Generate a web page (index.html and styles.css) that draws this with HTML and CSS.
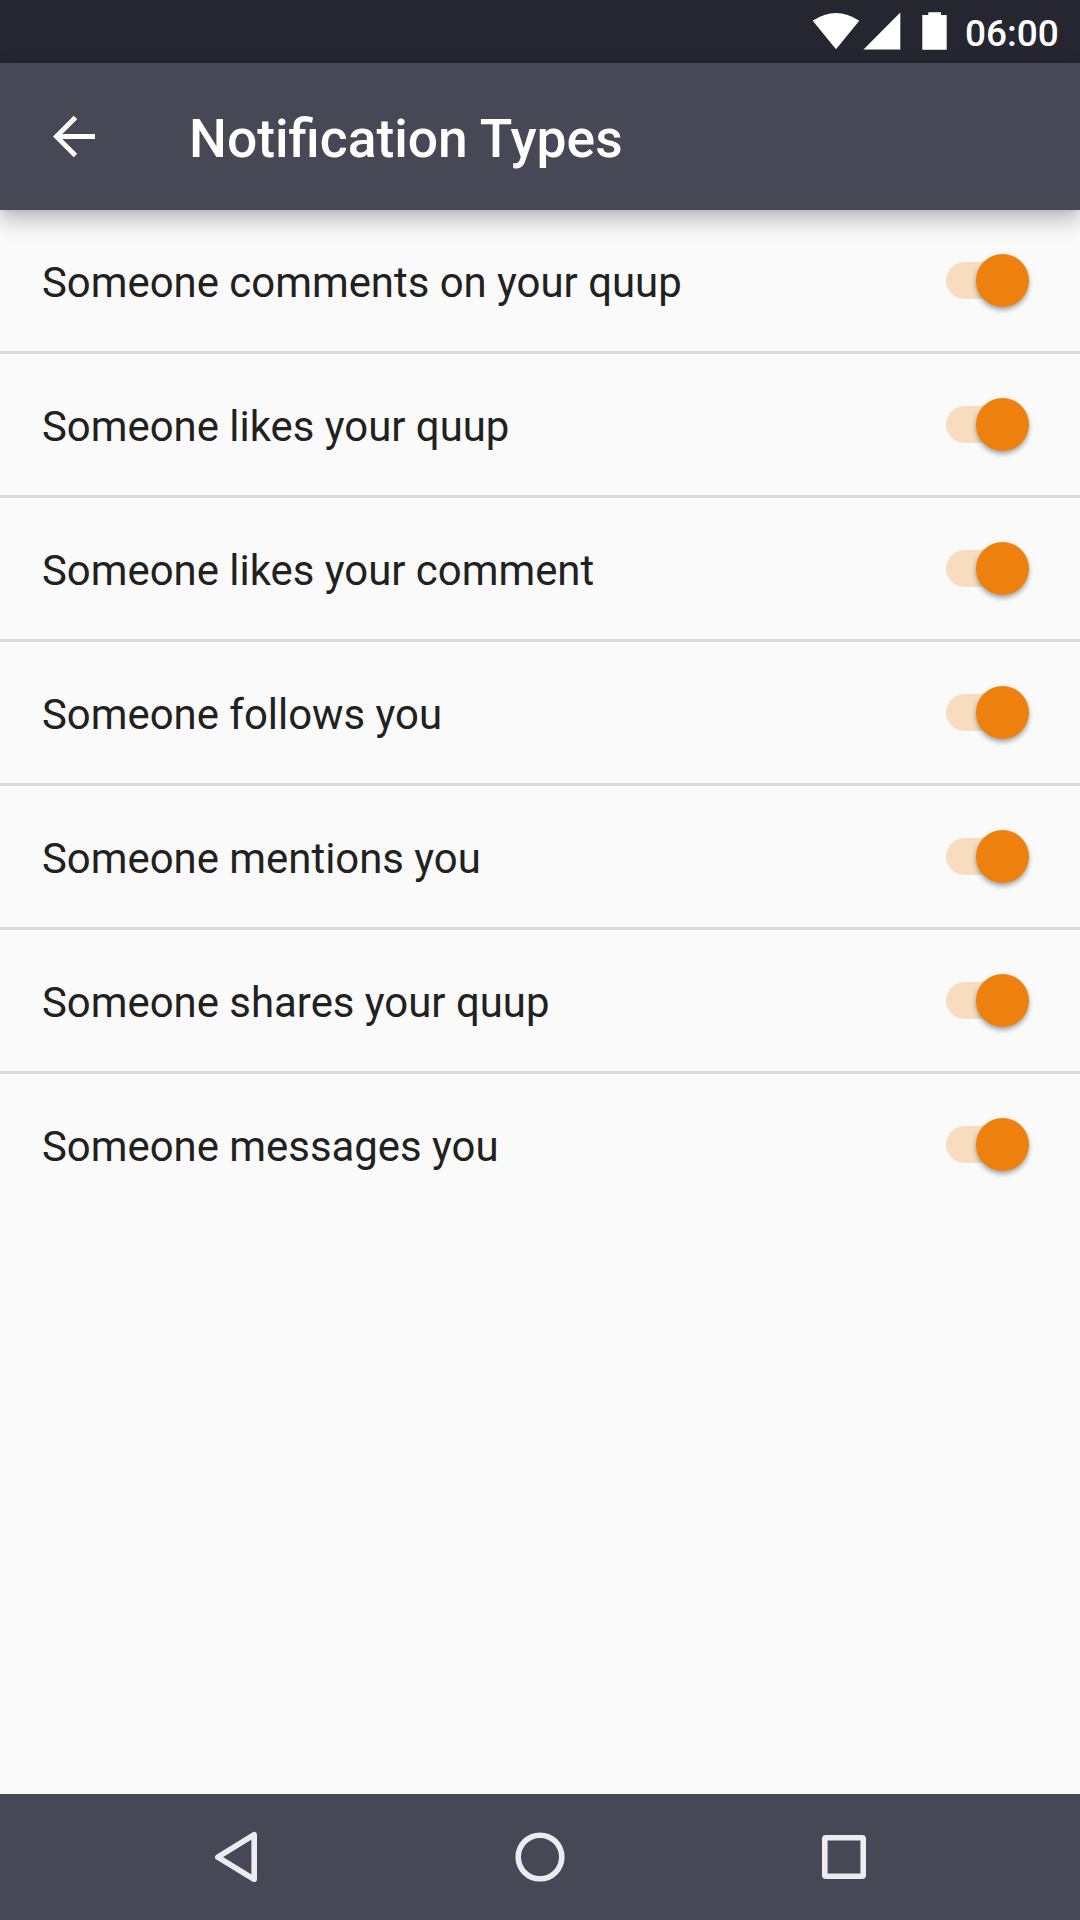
FILE: index.html
```html
<!DOCTYPE html>
<html lang="en">
<head>
<meta charset="utf-8">
<title>Notification Types</title>
<link rel="stylesheet" href="styles.css">
</head>
<body>
<div class="screen">
  <div class="status-bar">
    <svg class="signals" width="136" height="63" viewBox="0 0 136 63" fill="#fff">
      <path d="M0.7 20.7Q24 5.300 47.300 20.700L24 49.200Z"/>
      <path d="M88.300 12.500V49.500H51.500Z"/>
      <path d="M110.300 15H116.300V12.200H129V15H134.700V49.700H110.300Z"/>
    </svg>
    <span class="clock">06:00</span>
  </div>
  <header class="app-bar">
    <svg class="back" width="73" height="73" viewBox="0 0 73 73" fill="#fff">
      <path d="M16 36.500L36.700 15.700L40.200 19.200L25.300 34H58V39H25.300L40.200 53.800L36.700 57.300Z"/>
    </svg>
    <h1 class="title">Notification Types</h1>
  </header>
  <main class="list">
    <label class="row"><span class="label">Someone comments on your quup</span><span class="switch"><span class="thumb"></span></span></label>
    <label class="row"><span class="label">Someone likes your quup</span><span class="switch"><span class="thumb"></span></span></label>
    <label class="row"><span class="label">Someone likes your comment</span><span class="switch"><span class="thumb"></span></span></label>
    <label class="row"><span class="label">Someone follows you</span><span class="switch"><span class="thumb"></span></span></label>
    <label class="row"><span class="label">Someone mentions you</span><span class="switch"><span class="thumb"></span></span></label>
    <label class="row"><span class="label">Someone shares your quup</span><span class="switch"><span class="thumb"></span></span></label>
    <label class="row"><span class="label">Someone messages you</span><span class="switch"><span class="thumb"></span></span></label>
  </main>
  <nav class="nav-bar">
    <svg class="nav-icon" width="60" height="60" viewBox="0 0 60 60">
      <path d="M48.200 7.700V52.300L11.800 30.200Z"/>
    </svg>
    <svg class="nav-icon" width="60" height="60" viewBox="0 0 60 60">
      <circle cx="30" cy="30" r="21.800"/>
    </svg>
    <svg class="nav-icon" width="60" height="60" viewBox="0 0 60 60">
      <rect x="10.800" y="10.800" width="38.400" height="38.400" rx="1"/>
    </svg>
  </nav>
</div>
</body>
</html>
```
FILE: styles.css
```css
* {
  box-sizing: border-box;
}

body {
  margin: 0;
  font-family: Roboto, "Liberation Sans", sans-serif;
}

.screen {
  display: flex;
  flex-direction: column;
  width: 1080px;
  height: 1920px;
  overflow: hidden;
  background: #fafafa;
}

.status-bar {
  display: flex;
  flex: none;
  height: 63px;
  padding-left: 812px;
  gap: 17px;
  background: #25262f;
  color: #fff;
}

.signals {
  flex: none;
}

.clock {
  padding-top: 2px;
  font-size: 37px;
  font-weight: 500;
  line-height: 63px;
}

.app-bar {
  display: flex;
  flex: none;
  align-items: center;
  height: 147px;
  padding-left: 37px;
  gap: 79px;
  background: #464856;
  color: #fff;
  z-index: 1;
  box-shadow: 0 10px 20px rgba(0, 0, 0, 0.25), 0 0 6px rgba(0, 0, 0, 0.1);
}

.back {
  flex: none;
}

.title {
  margin: 0;
  padding-top: 5px;
  font-size: 53.400px;
  font-weight: 500;
  line-height: 62px;
}

.list {
  flex: 1;
}

.row {
  display: flex;
  align-items: center;
  justify-content: space-between;
  height: 144px;
  padding: 0 51px 0 42px;
  border-bottom: 3px solid #dbdbdb;
}

.row:last-child {
  border-bottom-color: transparent;
}

.label {
  padding-top: 4px;
  color: #212121;
  font-size: 41.900px;
  line-height: 50px;
}

.switch {
  display: flex;
  align-items: center;
  justify-content: flex-end;
  width: 83px;
  height: 37px;
  border-radius: 19px;
  background: #f8dcbf;
}

.thumb {
  width: 53px;
  height: 53px;
  flex: none;
  border-radius: 50%;
  background: #ee810e;
  box-shadow: 0 3px 5px rgba(0, 0, 0, 0.35);
}

.nav-bar {
  display: flex;
  flex: none;
  align-items: center;
  justify-content: space-between;
  height: 126px;
  padding: 0 206px;
  background: #464856;
}

.nav-icon {
  fill: none;
  stroke: #ececee;
  stroke-width: 5.600px;
  stroke-linejoin: round;
}
```
